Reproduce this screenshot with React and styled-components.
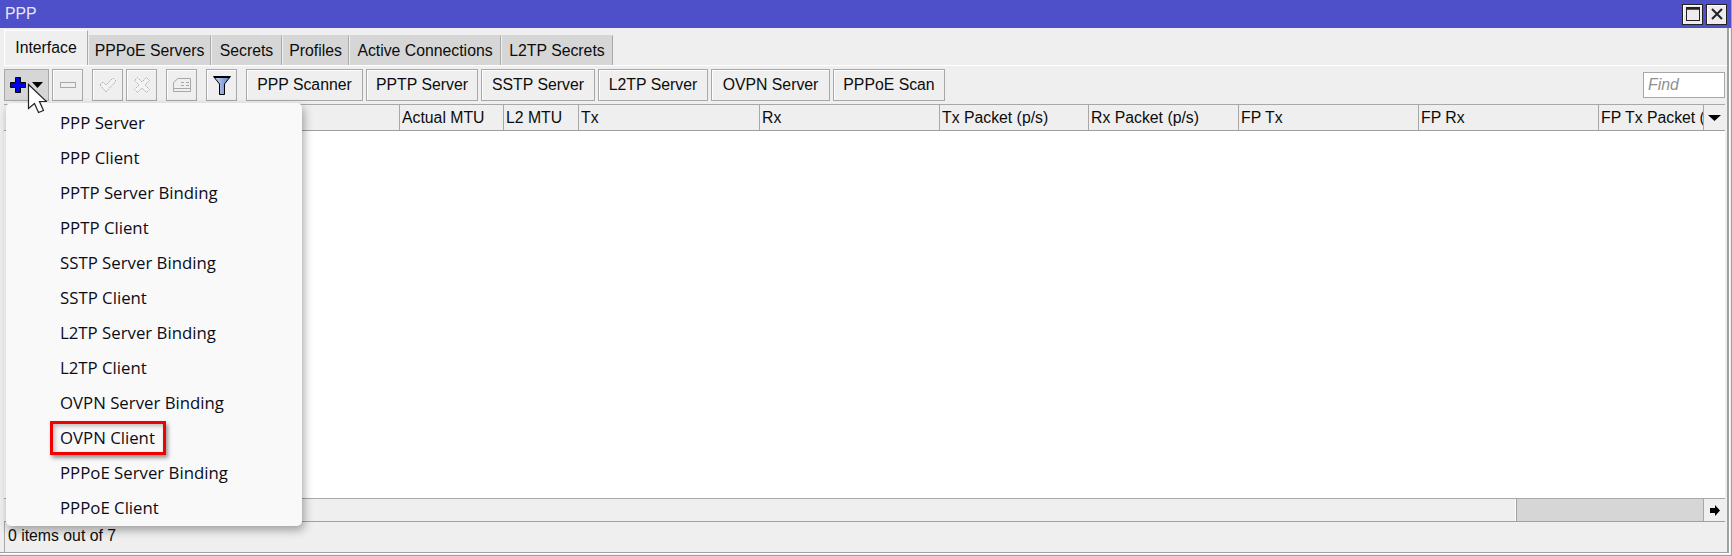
import React from "react";
import styled, { createGlobalStyle } from "styled-components";

const Global = createGlobalStyle`
  html, body { margin: 0; padding: 0; background: #efefef; overflow: hidden; }
  * { box-sizing: border-box; }
`;

const Frame = styled.div`
  position: relative;
  width: 1732px;
  height: 556px;
  display: flex;
  flex-direction: column;
  overflow: hidden;
  background: #efefef;
  border-right: 1px solid #a0a0a0;
  border-bottom: 1px solid #a0a0a0;
  font-family: "Liberation Sans", Arial, sans-serif;
  font-size: 15.8px;
  color: #0c0c0c;
`;

const TitleBar = styled.header`
  height: 28px;
  flex: none;
  display: flex;
  align-items: center;
  justify-content: space-between;
  padding: 0 4px 0 5px;
  background: #4e50ca;
  color: #e8e8f4;
  font-size: 15.8px;
`;

const WinButtons = styled.div`
  display: flex;
  gap: 3px;
`;

const WinButton = styled.button`
  width: 21px;
  height: 21px;
  padding: 0;
  display: flex;
  align-items: center;
  justify-content: center;
  background: #eeebee;
  border: 1px solid #222;
  box-shadow: inset 1px 1px 0 #fff;
`;

const Body = styled.div`
  flex: 1;
  min-height: 0;
  display: flex;
  flex-direction: column;
  margin: 0 2px 2px 0;
  padding: 2px 0 0 4px;
  border-right: 2px solid #a0a0a0;
  border-bottom: 1px solid #a0a0a0;
  box-shadow: 1px 1px 0 #fff;
`;

const Tabs = styled.nav`
  height: 35px;
  flex: none;
  display: flex;
  align-items: flex-end;
`;

const Tab = styled.div`
  height: ${(p) => (p.$active ? 35 : 30)}px;
  width: ${(p) => p.$w}px;
  flex: none;
  display: flex;
  align-items: center;
  justify-content: center;
  background: ${(p) => (p.$active ? "#efefef" : "#d6d6d6")};
  border-right: 1px solid #a9a9a9;
  border-left: 1px solid ${(p) => (p.$active ? "#fff" : "#efefef")};
  border-top: 1px solid ${(p) => (p.$active ? "#fff" : "#d6d6d6")};
`;

const Toolbar = styled.div`
  height: 39px;
  flex: none;
  display: flex;
  align-items: flex-start;
  padding-top: 3px;
  border-top: 1px solid #fff;
`;

const IconButton = styled.button`
  width: ${(p) => p.$w || 31}px;
  height: 32px;
  flex: none;
  margin-right: ${(p) => p.$after ?? 3}px;
  padding: 0;
  display: flex;
  align-items: center;
  justify-content: center;
  gap: 6px;
  background: ${(p) => (p.$pressed ? "#d6d6d6" : "#efefef")};
  border: 1px solid #a8a8a8;
  box-shadow: ${(p) => (p.$pressed ? "none" : "inset 1px 1px 0 #fff")};
`;

const TextButton = styled.button`
  width: ${(p) => p.$w}px;
  height: 32px;
  flex: none;
  margin-right: 3px;
  padding: 0;
  background: #efefef;
  border: 1px solid #a8a8a8;
  box-shadow: inset 1px 1px 0 #fff;
  font: inherit;
  color: inherit;
`;

const FindBox = styled.div`
  width: 82px;
  height: 26px;
  margin: 3px 2px 0 auto;
  padding-left: 4px;
  display: flex;
  align-items: center;
  background: #fff;
  border: 1px solid #a8a8a8;
  color: #909090;
  font-style: italic;
`;

const Table = styled.section`
  flex: 1;
  min-height: 0;
  display: flex;
  flex-direction: column;
  margin-right: 2px;
`;

const HeaderRow = styled.div`
  height: 27px;
  flex: none;
  display: flex;
  background: #efefef;
  border-top: 1px solid #a8a8a8;
  border-bottom: 1px solid #a0a0a0;
`;

const HeaderCell = styled.div`
  width: ${(p) => p.$w}px;
  flex: none;
  display: flex;
  align-items: center;
  justify-content: ${(p) => (p.$center ? "center" : "flex-start")};
  padding-left: ${(p) => (p.$center ? 0 : 2)}px;
  overflow: hidden;
  white-space: nowrap;
  border-left: 1px solid ${(p) => (p.$first ? "transparent" : "#a8a8a8")};
`;

const Rows = styled.div`
  flex: 1;
  background: #fff;
`;

const ScrollBar = styled.div`
  height: 24px;
  flex: none;
  display: flex;
  border-top: 1px solid #a8a8a8;
  border-bottom: 1px solid #a0a0a0;
`;

const ScrollThumb = styled.div`
  width: 1513px;
  flex: none;
  background: #efefef;
  border-right: 1px solid #a0a0a0;
  box-shadow: inset -1px 0 0 #fff;
`;

const ScrollTrack = styled.div`
  flex: 1;
  background: #d6d6d6;
`;

const ScrollArrow = styled.div`
  width: 22px;
  flex: none;
  display: flex;
  align-items: center;
  justify-content: center;
  background: #efefef;
  border-left: 1px solid #a8a8a8;
`;

const StatusBar = styled.footer`
  height: 30px;
  flex: none;
  display: flex;
  align-items: center;
  margin-left: 1px;
  padding: 0 0 2px 3px;
  box-shadow: -1px 0 0 #a8a8a8;
`;

const Menu = styled.ul`
  position: absolute;
  left: 6px;
  top: 103px;
  width: 296px;
  height: 423px;
  margin: 0;
  padding: 2px 0 0;
  list-style: none;
  background: #f9f9f9;
  border-radius: 5px;
  box-shadow: 2px 4px 10px rgba(0, 0, 0, 0.35);
  font-family: "Open Sans", "Noto Sans", sans-serif;
  font-size: 16.8px;
  color: #0c0c18;
`;

const MenuItem = styled.li`
  height: 35px;
  display: flex;
  align-items: center;
  padding-left: 54px;
`;

const Highlight = styled.span`
  position: absolute;
  left: 44px;
  top: 318px;
  width: 116px;
  height: 34px;
  border: 3px solid #f00000;
  box-shadow: 2px 3px 4px rgba(0, 0, 0, 0.4), inset 2px 2px 4px rgba(0, 0, 0, 0.25);
  pointer-events: none;
`;

const Cursor = styled.svg`
  position: absolute;
  left: 27px;
  top: 83px;
`;

const tabs = [
  ["Interface", 84, true],
  ["PPPoE Servers", 123],
  ["Secrets", 71],
  ["Profiles", 67],
  ["Active Connections", 152],
  ["L2TP Secrets", 112],
];

const buttons = [
  ["PPP Scanner", 117],
  ["PPTP Server", 112],
  ["SSTP Server", 114],
  ["L2TP Server", 110],
  ["OVPN Server", 119],
  ["PPPoE Scan", 112],
];

const columns = [
  ["", 395],
  ["Actual MTU", 104],
  ["L2 MTU", 75],
  ["Tx", 181],
  ["Rx", 180],
  ["Tx Packet (p/s)", 149],
  ["Rx Packet (p/s)", 150],
  ["FP Tx", 180],
  ["FP Rx", 180],
  ["FP Tx Packet (p/s)", 105],
];

const items = [
  "PPP Server",
  "PPP Client",
  "PPTP Server Binding",
  "PPTP Client",
  "SSTP Server Binding",
  "SSTP Client",
  "L2TP Server Binding",
  "L2TP Client",
  "OVPN Server Binding",
  "OVPN Client",
  "PPPoE Server Binding",
  "PPPoE Client",
];

const PlusIcon = () => (
  <svg width="16" height="16" viewBox="0 0 16 16">
    <path d="M5.500.5h5v5h5v5h-5v5h-5v-5h-5v-5h5z" fill="#0000e8" stroke="#000" />
  </svg>
);
const DropIcon = ({ w = 11 }) => (
  <svg width={w} height="6" viewBox={`0 0 ${w} 6`}>
    <path d={`M0 0h${w}L${w / 2} 6z`} fill="#000" />
  </svg>
);
const MinusIcon = () => (
  <svg width="16" height="6" viewBox="0 0 16 6">
    <rect x=".5" y=".5" width="15" height="5" fill="#efefef" stroke="#a8a8a8" />
  </svg>
);
const CheckIcon = () => (
  <svg width="18" height="16" viewBox="0 0 18 16">
    <path d="M1 8l3-3 3 3 7-7 3 3-10 11z" fill="#f4f4f4" stroke="#b0b0b0" strokeDasharray="2 1" />
  </svg>
);
const CrossIcon = () => (
  <svg width="16" height="16" viewBox="0 0 16 16">
    <path d="M.5 3.500l3-3 4.500 4.500 4.500-4.500 3 3-4.500 4.500 4.500 4.500-3 3-4.500-4.500-4.500 4.500-3-3 4.500-4.500z" fill="#f4f4f4" stroke="#b0b0b0" strokeDasharray="2 1" />
  </svg>
);
const NoteIcon = () => (
  <svg width="18" height="14" viewBox="0 0 18 14">
    <path d="M.5 4.500L5 .5h12.500v13H.5z" fill="#efefef" stroke="#a8a8a8" />
    <path d="M8 4.500h3M13 4.500h3M8 7.500h3M13 7.500h3M1 10.500h16" stroke="#a8a8a8" />
  </svg>
);
const FunnelIcon = () => (
  <svg width="18" height="19" viewBox="0 0 18 19">
    <defs>
      <linearGradient id="fn" x1="0" x2="1" y1="0" y2="0">
        <stop offset="0" stopColor="#d4def4" />
        <stop offset="1" stopColor="#5a78c8" />
      </linearGradient>
    </defs>
    <path d="M.5.500h17l-6 7.500v10.500h-5V8z" fill="url(#fn)" stroke="#000" />
    <path d="M1 1h16" stroke="#000" strokeWidth="2" />
  </svg>
);
const RestoreIcon = () => (
  <svg width="14" height="14" viewBox="0 0 14 14">
    <rect x=".5" y=".5" width="13" height="13" fill="none" stroke="#222" />
    <path d="M0 1.500h14" stroke="#222" strokeWidth="2.500" />
  </svg>
);
const CloseIcon = () => (
  <svg width="12" height="12" viewBox="0 0 12 12">
    <path d="M1 1l10 10M11 1L1 11" stroke="#222" strokeWidth="2" />
  </svg>
);
const RightArrow = () => (
  <svg width="10" height="11" viewBox="0 0 10 11">
    <path d="M0 3h5V0l5 5.500L5 11V8H0z" fill="#000" />
  </svg>
);

export default function App() {
  return (
    <Frame>
      <Global />
      <TitleBar>
        <span>PPP</span>
        <WinButtons>
          <WinButton aria-label="Maximize"><RestoreIcon /></WinButton>
          <WinButton aria-label="Close"><CloseIcon /></WinButton>
        </WinButtons>
      </TitleBar>
      <Body>
        <Tabs>
          {tabs.map(([label, w, active]) => (
            <Tab key={label} $w={w} $active={active}>{label}</Tab>
          ))}
        </Tabs>
        <Toolbar>
          <IconButton $w={45} $pressed $after={3} aria-label="Add"><PlusIcon /><DropIcon /></IconButton>
          <IconButton $after={9} aria-label="Remove"><MinusIcon /></IconButton>
          <IconButton aria-label="Enable"><CheckIcon /></IconButton>
          <IconButton $after={9} aria-label="Disable"><CrossIcon /></IconButton>
          <IconButton $after={9} aria-label="Comment"><NoteIcon /></IconButton>
          <IconButton $after={9} aria-label="Filter"><FunnelIcon /></IconButton>
          {buttons.map(([label, w]) => (
            <TextButton key={label} $w={w}>{label}</TextButton>
          ))}
          <FindBox>Find</FindBox>
        </Toolbar>
        <Table>
          <HeaderRow>
            {columns.map(([label, w], i) => (
              <HeaderCell key={label || i} $w={w} $first={i === 0}>{label}</HeaderCell>
            ))}
            <HeaderCell $w={22} $center><DropIcon w={13} /></HeaderCell>
          </HeaderRow>
          <Rows />
          <ScrollBar>
            <ScrollThumb />
            <ScrollTrack />
            <ScrollArrow><RightArrow /></ScrollArrow>
          </ScrollBar>
        </Table>
        <StatusBar>0 items out of 7</StatusBar>
      </Body>
      <Menu>
        {items.map((item) => (
          <MenuItem key={item}>{item}</MenuItem>
        ))}
        <Highlight />
      </Menu>
      <Cursor width="20" height="32" viewBox="0 0 20 32">
        <path d="M1.500 1.500v24l6-5 4 9 5-2-4-9h7z" fill="#fff" stroke="#222" strokeWidth="1.200" />
      </Cursor>
    </Frame>
  );
}
